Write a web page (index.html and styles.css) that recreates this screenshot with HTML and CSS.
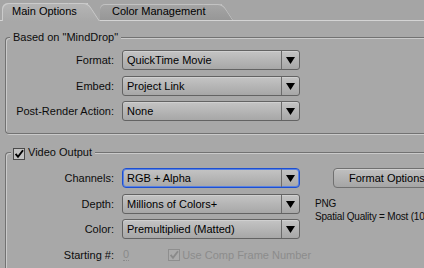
FILE: index.html
```html
<!DOCTYPE html>
<html>
<head>
<meta charset="utf-8">
<link rel="stylesheet" href="styles.css">
</head>
<body>
<div class="tabbar">
  <div class="tab tab-active">Main Options</div>
  <div class="tab tab-inactive">Color Management</div>
</div>

<div class="group group-based">
  <div class="legend"><span>Based on "MindDrop"</span></div>
  <div class="rows">
    <div class="label">Format:</div>
    <div class="select"><span class="val">QuickTime Movie</span><span class="arrow"><svg width="9" height="7" viewBox="0 0 9 7"><path d="M0 0H9L4.5 7Z"/></svg></span></div>
    <div class="label">Embed:</div>
    <div class="select"><span class="val">Project Link</span><span class="arrow"><svg width="9" height="7" viewBox="0 0 9 7"><path d="M0 0H9L4.5 7Z"/></svg></span></div>
    <div class="label">Post-Render Action:</div>
    <div class="select"><span class="val">None</span><span class="arrow"><svg width="9" height="7" viewBox="0 0 9 7"><path d="M0 0H9L4.5 7Z"/></svg></span></div>
  </div>
</div>

<div class="group group-video">
  <div class="legend legend-check">
    <svg class="check" width="12" height="12" viewBox="0 0 12 12"><rect x="0.5" y="0.5" width="11" height="11" fill="#c2c2c2" stroke="#4a4a4a"/><path d="M2.6 5.8L5 8.8L10 2.2" fill="none" stroke="#000" stroke-width="1.9"/></svg>
    <span>Video Output</span>
  </div>
  <div class="rows rows-video">
    <div class="label">Channels:</div>
    <div class="select select-focus"><span class="val">RGB + Alpha</span><span class="arrow"><svg width="9" height="7" viewBox="0 0 9 7"><path d="M0 0H9L4.5 7Z"/></svg></span></div>
    <div class="extra"><div class="btn">Format Options</div></div>
    <div class="label">Depth:</div>
    <div class="select"><span class="val">Millions of Colors+</span><span class="arrow"><svg width="9" height="7" viewBox="0 0 9 7"><path d="M0 0H9L4.5 7Z"/></svg></span></div>
    <div class="info">PNG<br>Spatial Quality = Most (100)</div>
    <div class="label">Color:</div>
    <div class="select"><span class="val">Premultiplied (Matted)</span><span class="arrow"><svg width="9" height="7" viewBox="0 0 9 7"><path d="M0 0H9L4.5 7Z"/></svg></span></div>
    <div class="label">Starting #:</div>
    <div class="start">
      <span class="zero">0</span>
      <span class="usecomp">
        <svg width="12" height="12" viewBox="0 0 12 12"><rect x="0.5" y="0.5" width="11" height="11" fill="#ababab" stroke="#8e8e8e"/><path d="M2.6 5.8L5 8.8L10 2.2" fill="none" stroke="#8a8a8a" stroke-width="1.9"/></svg>
        <span>Use Comp Frame Number</span>
      </span>
    </div>
  </div>
</div>
</body>
</html>
```

FILE: styles.css
```css
html, body {
  margin: 0;
  padding: 0;
}
body {
  width: 424px;
  height: 268px;
  overflow: hidden;
  background: #a8a8a8;
  font-family: "Liberation Sans", Arial, sans-serif;
  font-size: 11px;
  color: #0c0c0c;
}

/* Tabs */
.tabbar {
  display: flex;
  height: 21px;
  box-sizing: border-box;
  padding: 3px 0 0 2px;
  background: #a5a5a5;
  box-shadow: inset 0 -1px 0 #d4d4d4;
}
.tab {
  position: relative;
  box-sizing: border-box;
  color: #000;
  line-height: 17px;
}
.tab::after {
  content: "";
  position: absolute;
  top: 0;
  bottom: 0;
  right: -6px;
  width: 20px;
  background: inherit;
  transform: skewX(33deg);
  border-top-right-radius: 5px;
  z-index: -1;
}
.tab-active {
  z-index: 2;
  width: 86px;
  height: 18px;
  padding-left: 10px;
  border-top-left-radius: 6px;
  background: linear-gradient(#b5b5b5, #a8a8a8);
  box-shadow: inset 1px 1px 0 #cbcbcb;
}
.tab-active::after {
  box-shadow: inset -1px 1px 0 #cbcbcb;
  z-index: -1;
}
.tab-inactive {
  z-index: 1;
  width: 122px;
  height: 16px;
  margin-top: 1px;
  margin-left: 12px;
  padding-left: 12px;
  line-height: 15px;
  border-top-left-radius: 5px;
  background: linear-gradient(#a5a5a5, #979797);
  box-shadow: inset 0 1px 0 #c2c2c2;
}
.tab-inactive::after {
  box-shadow: inset -1px 1px 0 #c2c2c2;
}

/* Groups */
.group {
  margin-left: 5px;
  border: 1px solid #727272;
  border-right: none;
  border-radius: 4px 0 0 4px;
  box-shadow: 1px 1px 0 #cacaca, inset 1px 1px 0 #cacaca;
}
.group-based {
  margin-top: 16px;
  padding-bottom: 12px;
}
.group-video {
  margin-top: 18px;
  height: 115px;
  overflow: hidden;
  border-bottom: none;
  border-radius: 4px 0 0 0;
}
.legend {
  display: flex;
  align-items: center;
  width: max-content;
  height: 13px;
  margin: -7px 0 0 4px;
  padding: 0 3px;
  background: #a8a8a8;
  line-height: 13px;
}
.group-video .legend {
  margin-top: 0;
  position: relative;
  top: -7px;
  margin-bottom: -7px;
}
.legend-check {
  margin-left: 5px;
  padding: 0 3px 0 2px;
  gap: 3px;
}
.legend-check .check {
  margin-top: 2px;
}
.group-video {
  overflow: visible;
}

.rows {
  display: grid;
  grid-template-columns: 108px 178px;
  grid-auto-rows: 20px;
  column-gap: 8px;
  row-gap: 5.5px;
  padding-top: 6px;
}
.rows-video {
  grid-template-columns: 108px 178px auto;
  column-gap: 8px;
  padding-top: 9px;
}
.label {
  text-align: right;
  align-self: center;
  white-space: nowrap;
}

.select {
  display: flex;
  box-sizing: border-box;
  height: 20px;
  border: 1px solid #636363;
  border-radius: 3px;
  background: linear-gradient(#c4c4c4, #a7a7a7);
  box-shadow: inset 0 1px 0 #d0d0d0;
}
.select-focus {
  border-color: #1d4fd1;
  box-shadow: inset 0 0 0 1px #5a82e0;
  border-radius: 4px;
}
.val {
  flex: 1;
  padding-left: 4px;
  line-height: 18px;
  color: #000;
  white-space: nowrap;
}
.arrow {
  width: 17px;
  border-left: 1px solid #6c6c6c;
  display: flex;
  align-items: center;
  justify-content: center;
}
.arrow svg {
  fill: #000;
  margin-top: 1px;
}

.extra {
  padding-left: 25px;
}
.btn {
  box-sizing: border-box;
  width: 120px;
  height: 20px;
  padding-left: 15px;
  line-height: 18px;
  border: 1px solid #707070;
  border-radius: 4px;
  background: linear-gradient(#c0c0c0, #a5a5a5);
  box-shadow: inset 0 1px 0 #d0d0d0;
  color: #000;
  white-space: nowrap;
}
.info {
  grid-column: 3;
  grid-row: 2 / span 2;
  padding: 3px 0 0 7px;
  line-height: 13px;
  font-size: 10px;
  letter-spacing: -0.2px;
  color: #0c0c0c;
  white-space: nowrap;
}

.start {
  display: flex;
  align-items: center;
  padding-left: 1px;
}
.zero {
  color: #8a8a8a;
  line-height: 12px;
  border-bottom: 1px dotted #8a8a8a;
}
.usecomp {
  display: flex;
  align-items: center;
  gap: 2px;
  margin-left: 39px;
  color: #8c8c8c;
  white-space: nowrap;
}
```
